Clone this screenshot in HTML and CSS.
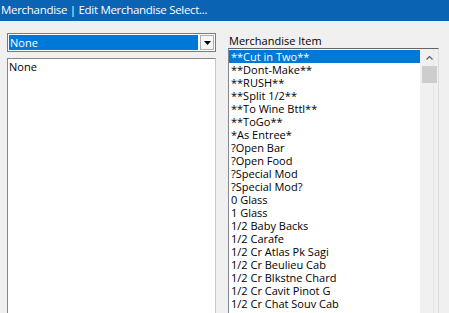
FILE: index.html
```html
<!DOCTYPE html>
<html>
<head>
<meta charset="utf-8">
<link rel="stylesheet" href="styles.css">
</head>
<body>
<div class="titlebar">Merchandise | Edit Merchandise Select...</div>
<div class="content">
  <div class="left">
    <div class="combo">
      <div class="combo-value"><span class="sel">None</span></div>
      <div class="combo-btn"><svg width="7" height="4" viewBox="0 0 7 4"><path d="M0 0H7L3.5 4Z" fill="#000"/></svg></div>
    </div>
    <div class="listbox left-list">
      <div class="row">None</div>
    </div>
  </div>
  <div class="right">
    <div class="label">Merchandise Item</div>
    <div class="listbox right-list">
      <div class="items">
        <div class="row selected">**Cut in Two**</div>
        <div class="row">**Dont-Make**</div>
        <div class="row">**RUSH**</div>
        <div class="row">**Split 1/2**</div>
        <div class="row">**To Wine Bttl**</div>
        <div class="row">**ToGo**</div>
        <div class="row">*As Entree*</div>
        <div class="row">?Open Bar</div>
        <div class="row">?Open Food</div>
        <div class="row">?Special Mod</div>
        <div class="row">?Special Mod?</div>
        <div class="row">0 Glass</div>
        <div class="row">1 Glass</div>
        <div class="row">1/2 Baby Backs</div>
        <div class="row">1/2 Carafe</div>
        <div class="row">1/2 Cr Atlas Pk Sagi</div>
        <div class="row">1/2 Cr Beulieu Cab</div>
        <div class="row">1/2 Cr Blkstne Chard</div>
        <div class="row">1/2 Cr Cavit Pinot G</div>
        <div class="row">1/2 Cr Chat Souv Cab</div>
      </div>
      <div class="scrollbar">
        <div class="sb-up"><svg width="7" height="4" viewBox="0 0 7 4"><path d="M0.5 3.5L3.5 0.5L6.5 3.5" fill="none" stroke="#606060" stroke-width="1.2"/></svg></div>
        <div class="sb-thumb"></div>
        <div class="sb-track"></div>
      </div>
    </div>
  </div>
</div>
</body>
</html>
```
FILE: styles.css
```css
html, body {
  margin: 0;
  padding: 0;
  width: 449px;
  height: 313px;
  overflow: hidden;
  background: #f0f0f0;
  font-family: "Open Sans", "Noto Sans", sans-serif;
  font-size: 11px;
  color: #000;
}
.titlebar {
  height: 21px;
  background: #0a63b3;
  color: #fff;
  font-size: 11.5px;
  letter-spacing: -0.3px;
  line-height: 20px;
  padding-left: 1px;
  white-space: nowrap;
  overflow: hidden;
}
.content {
  display: flex;
  align-items: flex-start;
  padding-left: 7px;
}
.left {
  width: 209px;
  padding-top: 12px;
  display: flex;
  flex-direction: column;
}
.combo {
  height: 19px;
  box-sizing: border-box;
  border: 1px solid #7a7a7a;
  background: #fff;
  display: flex;
  padding: 1px;
}
.combo-value {
  flex: 1;
  display: flex;
}
.sel {
  flex: 1;
  background: #0078d7;
  color: #fff;
  line-height: 15px;
  padding-left: 1px;
}
.combo-btn {
  width: 14px;
  margin-left: 2px;
  box-sizing: border-box;
  border: 1px solid #adadad;
  background: #f6f6f6;
  display: flex;
  align-items: center;
  justify-content: center;
}
.listbox {
  box-sizing: border-box;
  background: #fff;
  border: 1px solid #828790;
  border-right-color: #c8c8c8;
  border-bottom-color: #c8c8c8;
}
.left-list {
  margin-top: 6px;
  height: 260px;
  padding: 1px 0;
}
.left-list .row {
  padding-left: 1px;
}
.row {
  height: 13px;
  line-height: 13px;
  white-space: nowrap;
  padding-left: 2px;
}
.right {
  margin-left: 12px;
  width: 211px;
  display: flex;
  flex-direction: column;
}
.label {
  padding-top: 13px;
  line-height: 13px;
  padding-left: 1px;
  height: 14px;
}
.right-list {
  display: flex;
  height: 270px;
  border-color: #646464 #dcdcdc #dcdcdc #828790;
}
.items {
  flex: 1;
  padding-top: 1px;
  overflow: hidden;
}
.selected {
  background: #0078d7;
  color: #fff;
}
.scrollbar {
  width: 17px;
  background: #f0f0f0;
  display: flex;
  flex-direction: column;
  border-left: 1px solid #f0f0f0;
  box-shadow: inset -4px 0 0 #f0f0f0, inset -5px 0 0 #e6e6e6;
}
.sb-up {
  height: 17px;
  display: flex;
  align-items: center;
  justify-content: center;
}
.sb-thumb {
  height: 17px;
  margin: 0 1px;
  background: #cdcdcd;
}
.sb-track {
  flex: 1;
}
```
